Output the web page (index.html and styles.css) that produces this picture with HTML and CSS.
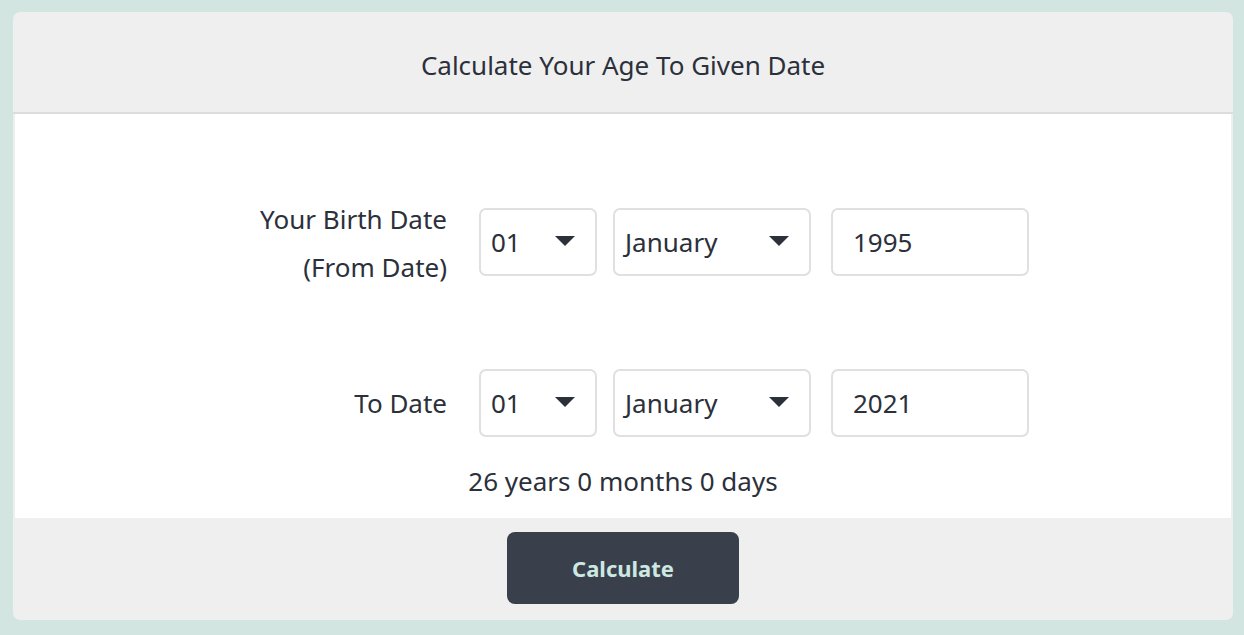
FILE: index.html
```html
<!DOCTYPE html>
<html>
<head>
<meta charset="utf-8">
<link rel="stylesheet" href="styles.css">
</head>
<body>
<div class="card">
  <div class="card-header">Calculate Your Age To Given Date</div>
  <div class="card-body">
    <div class="row row-birth">
      <div class="label">Your Birth Date<br>(From Date)</div>
      <div class="fields">
        <div class="select sel-day"><span>01</span><svg class="caret" viewBox="0 0 20 10"><path d="M0 0H20L10 10Z"/></svg></div>
        <div class="select sel-month"><span>January</span><svg class="caret" viewBox="0 0 20 10"><path d="M0 0H20L10 10Z"/></svg></div>
        <div class="input">1995</div>
      </div>
    </div>
    <div class="row row-to">
      <div class="label">To Date</div>
      <div class="fields">
        <div class="select sel-day"><span>01</span><svg class="caret" viewBox="0 0 20 10"><path d="M0 0H20L10 10Z"/></svg></div>
        <div class="select sel-month"><span>January</span><svg class="caret" viewBox="0 0 20 10"><path d="M0 0H20L10 10Z"/></svg></div>
        <div class="input">2021</div>
      </div>
    </div>
    <div class="result">26 years 0 months 0 days</div>
  </div>
  <div class="card-footer">
    <button class="btn">Calculate</button>
  </div>
</div>
</body>
</html>
```
FILE: styles.css
```css
html, body {
  margin: 0;
  padding: 0;
}
body {
  background: #d3e5e0;
  font-family: "Noto Sans", "Open Sans", sans-serif;
  color: #2b303b;
  padding: 12px 11px 15px 13px;
}
.card {
  background: #efefef;
  border-radius: 7px;
  padding: 0 2px;
  height: 608px;
  display: flex;
  flex-direction: column;
}
.card-header {
  height: 100px;
  padding-top: 6px;
  box-sizing: border-box;
  border-bottom: 2px solid #dddddd;
  display: flex;
  align-items: center;
  justify-content: center;
  font-size: 26px;
  margin: 0 -2px;
  height: 102px;
}
.card-body {
  background: #ffffff;
  height: 404px;
  display: flex;
  flex-direction: column;
  align-items: center;
  padding-top: 81px;
  box-sizing: border-box;
}
.row {
  display: flex;
  align-items: center;
  width: 812px;
}
.row-birth .fields {
  margin-top: -2px;
}
.row-to {
  margin-top: 78px;
}
.label {
  width: 230px;
  text-align: right;
  font-size: 26px;
  line-height: 48px;
  margin-right: 32px;
  flex: none;
  white-space: nowrap;
}
.fields {
  display: flex;
  align-items: center;
}
.select, .input {
  box-sizing: border-box;
  height: 68px;
  border: 2px solid #e0e0e0;
  border-radius: 7px;
  display: flex;
  align-items: center;
  font-size: 26px;
}
.select {
  justify-content: space-between;
  padding: 0 20px 0 10px;
}
.sel-day {
  width: 118px;
}
.sel-month {
  width: 198px;
  margin-left: 16px;
}
.input {
  width: 198px;
  margin-left: 20px;
  padding-left: 20px;
}
.caret {
  width: 20px;
  height: 10px;
  fill: #2b303b;
  margin-top: -3px;
}
.result {
  margin-top: 26px;
  font-size: 26px;
  line-height: 36px;
}
.card-footer {
  flex: 1;
  display: flex;
  justify-content: center;
  padding-top: 14px;
}
.btn {
  width: 232px;
  height: 72px;
  background: #3a404b;
  border: none;
  border-radius: 8px;
  color: #cde8e2;
  font-family: "Noto Sans", "Open Sans", sans-serif;
  font-weight: 700;
  font-size: 22px;
}
```
